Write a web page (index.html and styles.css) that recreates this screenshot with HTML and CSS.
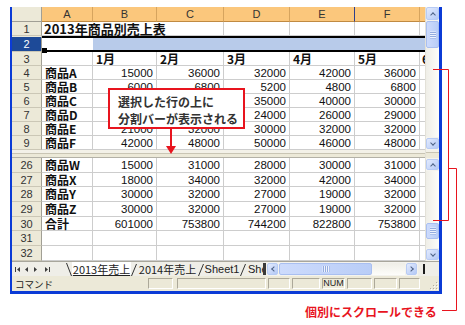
FILE: index.html
```html
<!DOCTYPE html>
<html lang="ja">
<head>
    <meta charset="UTF-8">
    <title>ウィンドウの分割</title>
    <link rel="stylesheet" href="styles.css">
</head>
<body>
<div class="stage">
    <div class="window">
        <div class="sheet">
            <div class="grid">
                <div class="row head">
                    <div class="rh corner"></div>
                    <div>A</div><div>B</div><div>C</div><div>D</div><div class="navy">E</div><div>F</div><div></div>
                </div>
                <div class="row">
                    <div class="rh">1</div>
                    <div class="title">2013年商品別売上表</div>
                    <div></div><div></div><div></div><div></div>
                </div>
                <div class="row sel">
                    <div class="rh">2</div>
                    <div class="active"><span class="handle"></span></div>
                    <div></div><div></div><div></div><div></div><div></div><div></div>
                </div>
                <div class="row">
                    <div class="rh">3</div><div></div>
                    <div class="m">1月</div><div class="m">2月</div><div class="m">3月</div><div class="m">4月</div><div class="m">5月</div><div class="m g">6月</div>
                </div>
                <div class="row">
                    <div class="rh">4</div><div class="l">商品A</div>
                    <div class="n">15000</div><div class="n">36000</div><div class="n">32000</div><div class="n">42000</div><div class="n">36000</div><div></div>
                </div>
                <div class="row">
                    <div class="rh">5</div><div class="l">商品B</div>
                    <div class="n">6000</div><div class="n">6800</div><div class="n">5200</div><div class="n">4800</div><div class="n">6800</div><div></div>
                </div>
                <div class="row">
                    <div class="rh">6</div><div class="l">商品C</div>
                    <div class="n">22000</div><div class="n">28000</div><div class="n">35000</div><div class="n">40000</div><div class="n">30000</div><div></div>
                </div>
                <div class="row">
                    <div class="rh">7</div><div class="l">商品D</div>
                    <div class="n">18000</div><div class="n">25000</div><div class="n">24000</div><div class="n">26000</div><div class="n">29000</div><div></div>
                </div>
                <div class="row">
                    <div class="rh">8</div><div class="l">商品E</div>
                    <div class="n">21000</div><div class="n">32000</div><div class="n">30000</div><div class="n">32000</div><div class="n">32000</div><div></div>
                </div>
                <div class="row">
                    <div class="rh">9</div><div class="l">商品F</div>
                    <div class="n">42000</div><div class="n">48000</div><div class="n">50000</div><div class="n">46000</div><div class="n">48000</div><div></div>
                </div>

                <div class="split"></div>

                <div class="lower">
                    <div class="row">
                        <div class="rh">26</div><div class="l">商品W</div>
                        <div class="n">15000</div><div class="n">31000</div><div class="n">28000</div><div class="n">30000</div><div class="n">31000</div><div></div>
                    </div>
                    <div class="row">
                        <div class="rh">27</div><div class="l">商品X</div>
                        <div class="n">18000</div><div class="n">34000</div><div class="n">32000</div><div class="n">42000</div><div class="n">34000</div><div></div>
                    </div>
                    <div class="row">
                        <div class="rh">28</div><div class="l">商品Y</div>
                        <div class="n">30000</div><div class="n">32000</div><div class="n">27000</div><div class="n">19000</div><div class="n">32000</div><div></div>
                    </div>
                    <div class="row">
                        <div class="rh">29</div><div class="l">商品Z</div>
                        <div class="n">30000</div><div class="n">32000</div><div class="n">27000</div><div class="n">19000</div><div class="n">32000</div><div></div>
                    </div>
                    <div class="row">
                        <div class="rh">30</div><div class="l">合計</div>
                        <div class="n">601000</div><div class="n">753800</div><div class="n">744200</div><div class="n">822800</div><div class="n">753800</div><div></div>
                    </div>
                    <div class="row">
                        <div class="rh">31</div><div></div><div></div><div></div><div></div><div></div><div></div><div></div>
                    </div>
                    <div class="row">
                        <div class="rh">32</div><div></div><div></div><div></div><div></div><div></div><div></div><div></div>
                    </div>
                </div>
            </div>

            <div class="vscroll">
                <div class="vbar upper-bar">
                    <div class="btn up"></div>
                    <div class="thumb top-thumb"></div>
                    <div class="track"></div>
                    <div class="btn down"></div>
                </div>
                <div class="vsplit"></div>
                <div class="vbar lower-bar">
                    <div class="btn up"></div>
                    <div class="track fixed"></div>
                    <div class="thumb low-thumb"></div>
                    <div class="track"></div>
                    <div class="btn down"></div>
                </div>
            </div>
        </div>

        <div class="tabbar">
            <div class="nav">
                <svg width="54" height="14" viewBox="0 0 54 14">
                    <g fill="#3c3c3c">
                        <rect x="3" y="5" width="1" height="5"/>
                        <polygon points="5,7.5 8,5 8,10"/>
                        <polygon points="13,7.5 16,5 16,10"/>
                        <polygon points="22,5 22,10 25,7.5"/>
                        <polygon points="33,5 33,10 36,7.5"/>
                        <rect x="37" y="5" width="1" height="5"/>
                    </g>
                </svg>
            </div>
            <span class="sep"><svg width="6" height="14"><path d="M0.5 1 L5.5 14" stroke="#333" fill="none"/></svg></span>
            <div class="tab current">2013年売上</div>
            <span class="sep"><svg width="6" height="14"><path d="M5.5 2 L0.5 14" stroke="#333" fill="none"/></svg></span>
            <div class="tab t2">2014年売上</div>
            <span class="sep"><svg width="6" height="14"><path d="M5.5 2 L0.5 14" stroke="#333" fill="none"/></svg></span>
            <div class="tab t3">Sheet1</div>
            <span class="sep"><svg width="6" height="14"><path d="M5.5 2 L0.5 14" stroke="#333" fill="none"/></svg></span>
            <div class="tab t4">Sheet2</div>
            <div class="tabsplit"></div>
            <div class="hscroll">
                <div class="btn left"></div>
                <div class="thumb h-thumb"></div>
                <div class="track h-track"></div>
                <div class="btn right"></div>
            </div>
            <div class="box-gap"></div>
            <div class="box"></div>
        </div>

        <div class="statusbar">
            <div class="mode">コマンド</div>
            <div class="panel w25"></div>
            <div class="panel w89"></div>
            <div class="panel w22"></div>
            <div class="panel w28"></div>
            <div class="panel w23">NUM</div>
            <div class="panel w25"></div>
            <div class="panel w23"></div>
            <div class="panel w21"></div>
            <div class="grip">
                <svg width="12" height="11">
                    <g fill="#fff"><rect x="10" y="3" width="1" height="1"/><rect x="7" y="6" width="1" height="1"/><rect x="10" y="6" width="1" height="1"/><rect x="4" y="9" width="1" height="1"/><rect x="7" y="9" width="1" height="1"/><rect x="10" y="9" width="1" height="1"/></g>
                    <g fill="#b0ad9f"><rect x="9" y="2" width="1" height="1"/><rect x="6" y="5" width="1" height="1"/><rect x="9" y="5" width="1" height="1"/><rect x="3" y="8" width="1" height="1"/><rect x="6" y="8" width="1" height="1"/><rect x="9" y="8" width="1" height="1"/></g>
                </svg>
            </div>
        </div>
    </div>

    <div class="callout">選択した行の上に<br>分割バーが表示される</div>

    <svg class="marks" width="465" height="325">
        <line x1="171" y1="129" x2="171" y2="147" stroke="#e8141e" stroke-width="2"/>
        <polygon points="166,146 176,146 171,154" fill="#e8141e"/>
        <polyline points="433,69.5 448.5,69.5 448.5,220.5 433,220.5" stroke="#e8141e" fill="none"/>
        <polyline points="448.5,168.5 456.5,168.5 456.5,310.5 442,310.5" stroke="#e8141e" fill="none"/>
    </svg>

    <div class="note">個別にスクロールできる</div>
</div>
</body>
</html>
```

FILE: styles.css
```css
* {
    box-sizing: border-box;
}
body {
    margin: 0;
    background: #fff;
    font-family: 'Liberation Sans', Arial, sans-serif;
    color: #111;
}
.stage {
    position: relative;
    width: 465px;
    height: 325px;
    overflow: hidden;
}
.window {
    width: 432px;
    margin: 7px 0 0 10px;
    border-left: 2px solid #0b3bd6;
    border-right: 3px solid #0b3bd6;
    border-bottom: 3px solid #0b3bd6;
    background: #ece9d8;
}
.sheet {
    display: flex;
}
.grid {
    width: 413px;
    background: #fff;
    overflow: hidden;
}
.row {
    display: grid;
    grid-template-columns: 30px 51px 64px 67px 66px 65px 65px 5px;
    height: 14px;
}
.lower .row {
    height: 14.7px;
}
.row > div {
    display: flex;
    align-items: center;
    white-space: nowrap;
    padding: 0 3px;
    border-right: 1px solid #cdcdcd;
    border-bottom: 1px solid #cdcdcd;
    font-size: 11.5px;
    line-height: 12px;
}
.row > .rh {
    justify-content: center;
    padding: 0;
    background: #ece9d8;
    border-bottom-color: #cbc7b6;
    border-right-color: #a19f95;
    color: #333;
    font-size: 11px;
}
.head {
    height: 15px;
}
.head > div {
    justify-content: center;
    background: #fbc77c;
    border-right-color: #d6a45e;
    border-bottom-color: #c08a42;
    color: #333;
    font-size: 11px;
}
.head > .navy {
    border-right-color: #2d3f8c;
}
.head > .corner {
    background: #ece9d8;
    border-bottom-color: #a19f95;
}
.row > .title {
    grid-column: span 3;
    padding-left: 2px;
    font-family: 'Noto Sans CJK JP', sans-serif;
    font-weight: 700;
    font-size: 13px;
}
.sel {
    height: 16px;
}
.sel > div {
    background: #b8cbea;
    border-top: 2px solid #000;
    border-bottom: 2px solid #000;
    border-right: 0;
}
.sel > .active {
    background: #fff;
    position: relative;
}
.sel > .rh {
    background: #1d4a98;
    color: #fff;
    border-top: 1px solid #ece9d8;
    border-bottom: 1px solid #cbc7b6;
    border-right: 1px solid #a19f95;
}
.handle {
    position: absolute;
    left: 0;
    bottom: -3px;
    width: 5px;
    height: 5px;
    background: #000;
}
.row > .l,
.row > .m {
    font-family: 'Noto Sans CJK JP', sans-serif;
    font-weight: 700;
    font-size: 12px;
}
.row > .g {
    padding-left: 2px;
}
.row > .n {
    justify-content: flex-end;
}
.split {
    height: 8px;
    background: linear-gradient(#f3f1e8 0 3px, #c9c5b4 3px 4px, #ece9d8 4px);
    border-bottom: 1px solid #b3b1a6;
}

/* scrollbars */
.vscroll {
    width: 14px;
    display: flex;
    flex-direction: column;
    background: #f4f3ee;
    border-left: 1px solid #e3e1d8;
}
.vbar {
    display: flex;
    flex-direction: column;
}
.upper-bar {
    height: 143px;
}
.lower-bar {
    height: 103px;
}
.vsplit {
    height: 8px;
    background: linear-gradient(#f3f1e8 0 2px, #c9c5b4 2px 3px, #ece9d8 3px);
}
.btn {
    display: flex;
    align-items: center;
    justify-content: center;
    height: 11px;
    margin: 1px 0;
    border: 1px solid #b7cbf4;
    border-radius: 2px;
    background: linear-gradient(135deg, #e2eafd, #b4c9f6);
}
.btn::after {
    content: "";
    width: 3px;
    height: 3px;
    border: solid #4d6185;
    border-width: 1.5px 0 0 1.5px;
}
.up::after {
    transform: translateY(1px) rotate(45deg);
}
.down::after {
    transform: translateY(-1px) rotate(225deg);
}
.left::after {
    transform: translateX(1px) rotate(-45deg);
}
.right::after {
    transform: translateX(-1px) rotate(135deg);
}
.upper-bar .btn.up {
    height: 13px;
    margin-top: 0;
}
.track {
    flex: 1;
    background: linear-gradient(90deg, #efeee7, #fdfdfa);
}
.track.fixed {
    flex: 0 0 52px;
}
.thumb {
    position: relative;
    border: 1px solid #a9bff0;
    border-radius: 2px;
    background: linear-gradient(90deg, #cddbfc, #b9cdf7);
}
.thumb::after {
    content: "";
    position: absolute;
    left: 50%;
    top: 50%;
    width: 6px;
    height: 7px;
    transform: translate(-50%, -50%);
    background: repeating-linear-gradient(#eef3fe 0 1px, #94acdf 1px 2px);
}
.top-thumb {
    height: 27px;
}
.low-thumb {
    height: 16px;
}

/* sheet tabs */
.tabbar {
    display: flex;
    height: 15px;
    background: #efeee8;
    border-top: 1px solid #a8a69c;
    font-size: 11px;
}
.nav {
    width: 54px;
}
.nav svg {
    display: block;
}
.sep {
    width: 6px;
    flex: none;
}
.sep svg {
    display: block;
}
.tab {
    display: flex;
    align-items: center;
    justify-content: center;
    white-space: nowrap;
    font-family: 'Noto Sans CJK JP', sans-serif;
    line-height: 13px;
    color: #222;
}
.current {
    width: 59px;
    background: #fff;
    text-decoration: underline;
}
.t2 {
    width: 61px;
}
.t3 {
    width: 36px;
    font-family: 'Liberation Sans', Arial, sans-serif;
}
.t4 {
    width: 17px;
    overflow: hidden;
    justify-content: flex-start;
    padding-left: 2px;
    font-family: 'Liberation Sans', Arial, sans-serif;
}
.tabsplit {
    width: 3px;
    background: #3a3a3a;
    margin: 1px 0;
}
.hscroll {
    display: flex;
    width: 152px;
    padding: 1px 0;
    background: #f4f3ee;
}
.hscroll .btn {
    width: 11px;
    height: auto;
    margin: 0 1px;
}
.h-thumb {
    width: 93px;
}
.h-thumb::after {
    width: 7px;
    height: 6px;
    background: repeating-linear-gradient(90deg, #eef3fe 0 1px, #94acdf 1px 2px);
}
.h-track {
    background: linear-gradient(#efeee7, #fdfdfa);
}
.box-gap {
    width: 5px;
}
.box {
    flex: 1;
    border-left: 2px solid #1a1a1a;
    margin: 2px 0;
}

/* status bar */
.statusbar {
    display: flex;
    align-items: center;
    gap: 2px;
    height: 15px;
    background: #ece9d8;
}
.mode {
    width: 134px;
    padding-left: 3px;
    font-family: 'Noto Sans CJK JP', sans-serif;
    font-size: 9.5px;
    line-height: 12px;
    color: #222;
}
.panel {
    height: 11px;
    border: 1px solid;
    border-color: #aca899 #fff #fff #aca899;
    font-size: 9px;
    line-height: 9px;
    text-align: center;
    color: #222;
}
.w25 { width: 25px; }
.w89 { width: 89px; margin-left: 2px; }
.w22 { width: 22px; }
.w28 { width: 28px; }
.w23 { width: 23px; }
.w21 { width: 21px; }
.grip {
    flex: 1;
    display: flex;
    justify-content: flex-end;
    align-self: flex-end;
}
.grip svg {
    display: block;
}

/* annotations */
.callout {
    position: absolute;
    left: 108px;
    top: 88px;
    width: 137px;
    height: 41px;
    padding: 3px 0 0 8px;
    border: 2px solid #e8141e;
    background: #fff;
    font-family: 'Noto Sans CJK JP', sans-serif;
    font-weight: 700;
    font-size: 12px;
    line-height: 17px;
    color: #333;
    white-space: nowrap;
}
.marks {
    position: absolute;
    left: 0;
    top: 0;
    pointer-events: none;
}
.note {
    position: absolute;
    left: 305px;
    top: 305px;
    font-family: 'Noto Sans CJK JP', sans-serif;
    font-weight: 700;
    font-size: 12px;
    line-height: 14px;
    color: #e8141e;
}
```
